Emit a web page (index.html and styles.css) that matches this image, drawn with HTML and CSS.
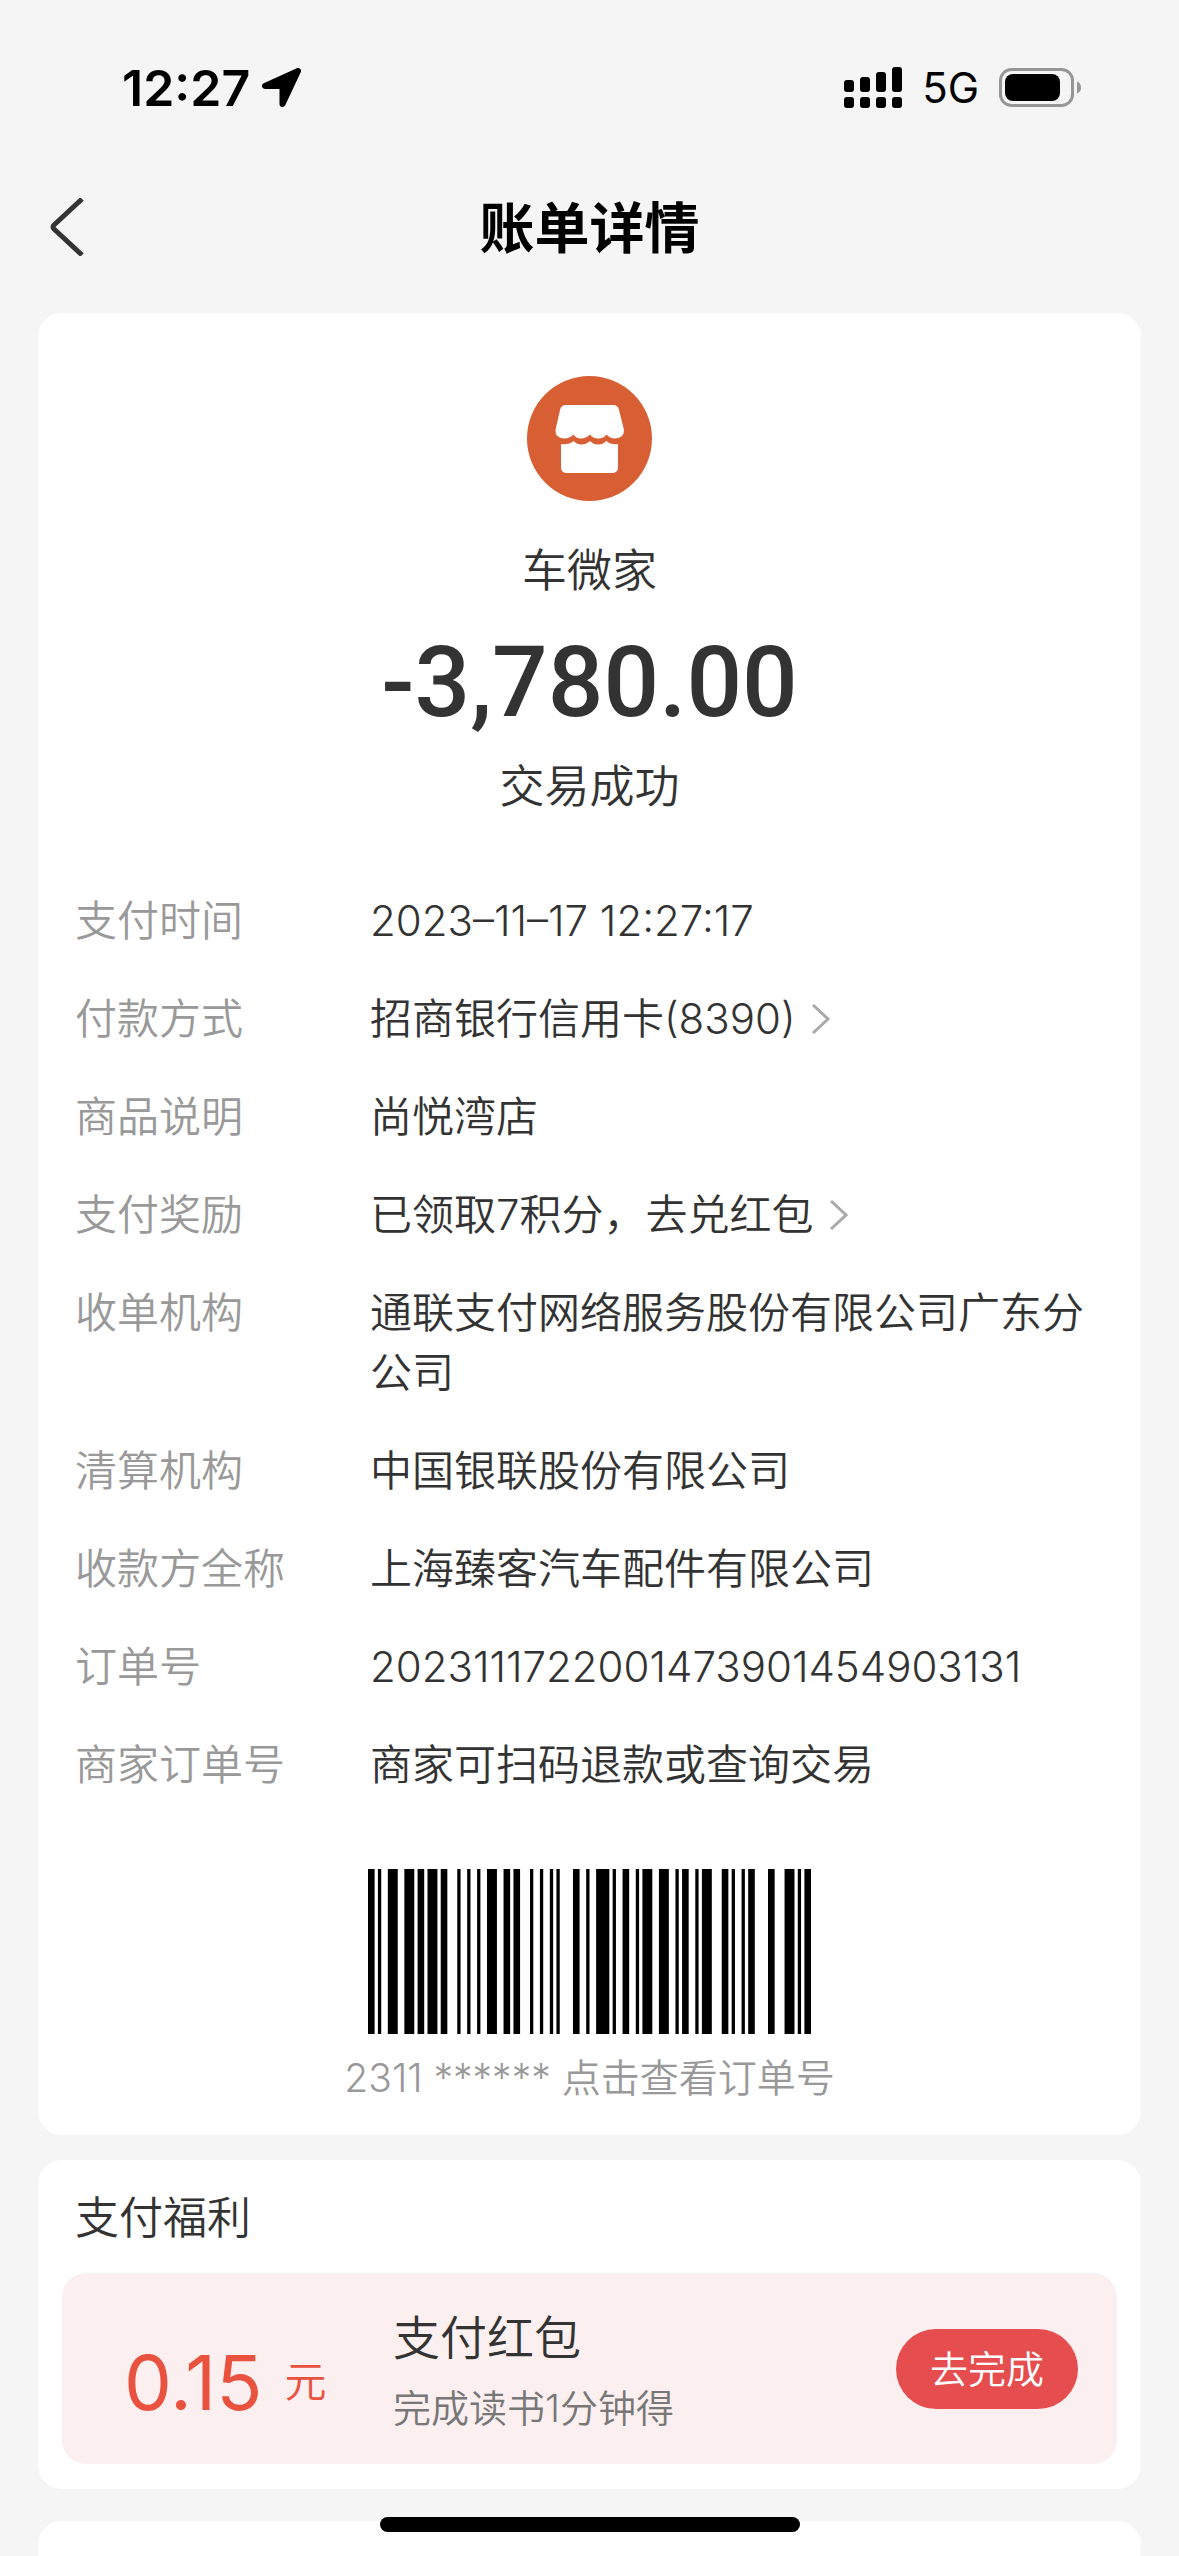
FILE: index.html
```
<!DOCTYPE html>
<html lang="zh-CN">
<head>
    <meta charset="UTF-8">
    <title>账单详情</title>
    <link rel="stylesheet" href="styles.css">
</head>
<body>
    <div class="status-bar">
        <span class="clock">12:27</span>
        <svg class="location" viewBox="0 0 40 40"><path d="M36 3L3 18H20.500V36Z" stroke="#000" stroke-width="6" stroke-linejoin="round"/></svg>
        <svg class="signal" viewBox="0 0 58 42">
            <rect x="0" y="13" width="10" height="12" rx="3"/>
            <rect x="16" y="10" width="10" height="15" rx="3"/>
            <rect x="32" y="5" width="10" height="20" rx="3"/>
            <rect x="48" y="0" width="10" height="25" rx="3"/>
            <rect x="0" y="30" width="10" height="11" rx="3"/>
            <rect x="16" y="30" width="10" height="11" rx="3"/>
            <rect x="32" y="30" width="10" height="11" rx="3"/>
            <rect x="48" y="30" width="10" height="11" rx="3"/>
        </svg>
        <span class="network">5G</span>
        <svg class="battery" viewBox="0 0 82 40">
            <rect x="1.500" y="1.500" width="72" height="36" rx="11" fill="none" stroke="#969696" stroke-width="3"/>
            <rect x="6" y="6" width="55" height="27" rx="8"/>
            <path d="M78 13.500Q82 15 82 19.500T78 25.500Z" fill="#969696"/>
        </svg>
    </div>

    <header class="nav">
        <button class="back" type="button" aria-label="返回">
            <svg viewBox="0 0 34 58"><path d="M32 1L4 27Q2 29 4 31L32 57"/></svg>
        </button>
        <h1>账单详情</h1>
    </header>

    <main>
        <section class="card bill">
            <div class="summary">
                <svg class="shop-logo" viewBox="0 0 125 125">
                    <circle cx="62.500" cy="62.500" r="62.500" fill="#d85f33"/>
                    <path fill="#fff" d="M39 29H86Q91 29 92 34L97 54Q97 62 88 62.500Q83 62.500 79.500 58.500Q77 62.500 71 62.500Q66 62.500 63 58.500Q59 62.500 54 62.500Q49 62.500 46.500 58.500Q43 62.500 37 62.500Q28 62 28.500 54L33 34Q34 29 39 29Z"/>
                    <path fill="#fff" d="M34 68Q42 69 46.500 65Q50 68.500 54.500 68.500Q59 68.500 63 65Q66 68.500 71 68.500Q76 68.500 79.500 65Q84 69 91 68V91Q91 97 85 97H40Q34 97 34 91Z"/>
                </svg>
                <p class="shop-name">车微家</p>
                <p class="amount">-3,780.00</p>
                <p class="result">交易成功</p>
            </div>

            <dl class="details">
                <dt>支付时间</dt><dd>2023–11–17 12:27:17</dd>
                <dt>付款方式</dt><dd><a href="#">招商银行信用卡(8390)<svg class="more" viewBox="0 0 20 30"><path d="M2 1L17 15L2 29"/></svg></a></dd>
                <dt>商品说明</dt><dd>尚悦湾店</dd>
                <dt>支付奖励</dt><dd><a href="#">已领取7积分，去兑红包<svg class="more" viewBox="0 0 20 30"><path d="M2 1L17 15L2 29"/></svg></a></dd>
                <dt>收单机构</dt><dd>通联支付网络服务股份有限公司广东分公司</dd>
                <dt>清算机构</dt><dd>中国银联股份有限公司</dd>
                <dt>收款方全称</dt><dd>上海臻客汽车配件有限公司</dd>
                <dt>订单号</dt><dd>2023111722001473901454903131</dd>
                <dt>商家订单号</dt><dd>商家可扫码退款或查询交易</dd>
            </dl>

            <button class="barcode" type="button">
                <!-- Code 128, 134 modules wide -->
                <svg viewBox="0 0 134 1" preserveAspectRatio="none">
                    <path d="M0 0h2v1h-2zM3 0h1v1h-1zM6 0h3v1h-3z
                             M11 0h3v1h-3zM15 0h2v1h-2zM18 0h3v1h-3z
                             M22 0h2v1h-2zM27 0h1v1h-1zM30 0h1v1h-1z
                             M33 0h1v1h-1zM36 0h3v1h-3zM41 0h2v1h-2z
                             M44 0h2v1h-2zM49 0h1v1h-1zM52 0h1v1h-1z
                             M55 0h1v1h-1zM57 0h1v1h-1zM62 0h2v1h-2z
                             M66 0h1v1h-1zM69 0h4v1h-4zM74 0h1v1h-1z
                             M77 0h2v1h-2zM81 0h1v1h-1zM83 0h3v1h-3z
                             M88 0h3v1h-3zM93 0h1v1h-1zM95 0h2v1h-2z
                             M99 0h1v1h-1zM101 0h3v1h-3zM107 0h2v1h-2z
                             M110 0h1v1h-1zM113 0h1v1h-1zM115 0h2v1h-2z
                             M121 0h2v1h-2zM126 0h3v1h-3zM130 0h1v1h-1zM132 0h2v1h-2z"/>
                </svg>
                <span>2311 ****** 点击查看订单号</span>
            </button>
        </section>

        <section class="card benefits">
            <h2>支付福利</h2>
            <div class="coupon">
                <p class="money"><span>0.15</span>元</p>
                <div class="coupon-text">
                    <h3>支付红包</h3>
                    <p>完成读书1分钟得</p>
                </div>
                <button class="go" type="button">去完成</button>
            </div>
        </section>

        <section class="card next"></section>
    </main>

    <div class="home-indicator"></div>
</body>
</html>
```
FILE: styles.css
```
* { box-sizing: border-box; }
html, body { height: 100%; }
body {
    margin: 0;
    display: flex;
    flex-direction: column;
    overflow: hidden;
    background: #f5f5f5;
    color: #333;
    font-family: Inter, "Noto Sans CJK SC", sans-serif;
    font-size: 42px;
    font-weight: 350;
    line-height: 60px;
}
h1, h2, h3, p, dl, dd { margin: 0; font-weight: inherit; }
button { padding: 0; border: none; background: none; font: inherit; color: inherit; cursor: pointer; }
a { color: inherit; text-decoration: none; }
svg { display: block; flex: none; }

/* 状态栏 */
.status-bar { display: flex; align-items: center; flex: none; height: 176px; padding: 0 98px 0 122px; color: #000; }
.clock { font-size: 50px; font-weight: 600; }
.location { width: 40px; height: 40px; margin-left: 12px; }
.signal { width: 58px; height: 42px; margin-left: auto; }
.network { margin: 0 20px; font-weight: 400; }
.battery { width: 82px; height: 40px; }

/* 标题栏 */
.nav { position: relative; flex: none; height: 137px; display: flex; justify-content: center; padding-top: 20px; }
.nav h1 { color: #000; font-size: 55px; font-weight: 700; line-height: 64px; }
.back { position: absolute; left: 50px; top: 22px; }
.back svg { width: 34px; height: 58px; }
.back path { fill: none; stroke: #333; stroke-width: 5; }

/* 卡片 */
main { display: flex; flex-direction: column; flex: 1; min-height: 0; padding: 0 38px; }
.card { flex: none; border-radius: 24px; background: #fff; }
.bill { padding: 63px 37px 27px; }
.summary { display: flex; flex-direction: column; align-items: center; }
.shop-logo { width: 125px; height: 125px; }
.shop-name, .result { font-size: 45px; line-height: 64px; }
.shop-name { margin-top: 38px; }
.amount { font-family: Roboto, sans-serif; font-size: 98px; font-weight: 500; line-height: 120px; margin: 20px 0 12px; }

.details { display: grid; grid-template-columns: 295px 1fr; row-gap: 38px; margin-top: 72px; }
.details dt { color: #999; }
.details a { display: flex; align-items: center; }
.more { width: 20px; height: 30px; margin-left: 15px; }
.more path { fill: none; stroke: #aaa; stroke-width: 3; }

.barcode { display: block; margin: 74px auto 0; color: #999; font-size: 39px; line-height: 60px; }
.barcode svg { width: 443px; height: 165px; margin: 0 auto 14px; fill: #000; }
.barcode span { display: block; }

.benefits { margin-top: 25px; padding: 27px 24px 25px; }
.benefits h2 { padding-left: 13px; font-size: 44px; line-height: 62px; }
.coupon { display: flex; align-items: center; height: 191px; margin-top: 24px; padding: 0 39px 0 62px; border-radius: 24px; background: #fcefef; }
.money { display: flex; align-items: center; width: 269px; margin-top: 26px; color: #e8523f; }
.money span { margin-right: 22px; font-size: 76px; font-weight: 400; }
.coupon-text { flex: 1; margin-top: 8px; }
.coupon-text h3 { font-size: 47px; line-height: 70px; }
.coupon-text p { color: #777; font-size: 38px; line-height: 70px; }
.go { width: 182px; height: 80px; border-radius: 40px; background: #e64d4f; color: #fff; font-size: 38px; }

.next { height: 160px; margin-top: 32px; }

.home-indicator { position: fixed; left: 50%; bottom: 24px; width: 420px; height: 15px; margin-left: -210px; border-radius: 8px; background: #000; }
```
